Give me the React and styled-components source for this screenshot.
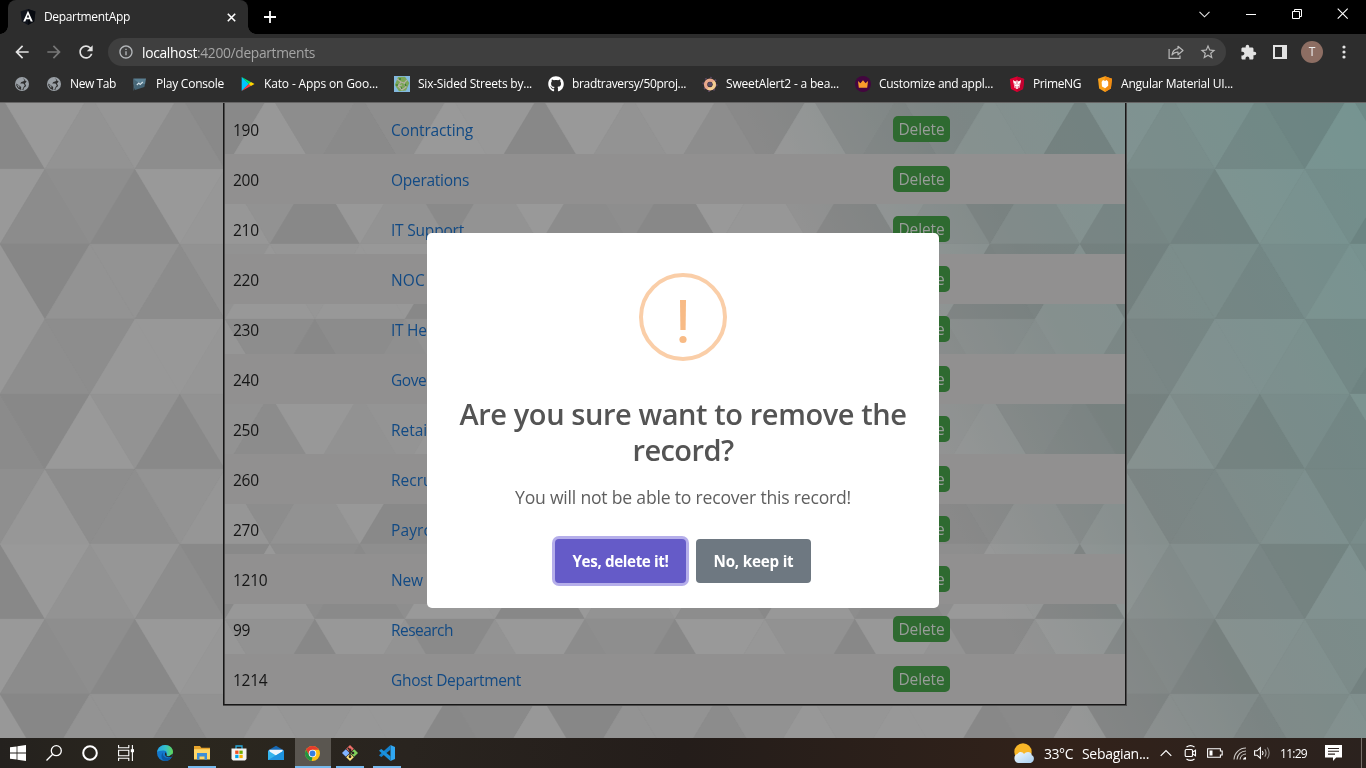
import React, { useLayoutEffect, useRef, useState } from "react";
import styled, { createGlobalStyle } from "styled-components";
import { MdArrowBack, MdArrowForward, MdRefresh, MdInfoOutline, MdStarBorder, MdExtension } from "react-icons/md";
import { FaGithub } from "react-icons/fa";

const GlobalStyle = createGlobalStyle`
  * { box-sizing: border-box; }
  html, body { margin: 0; padding: 0; overflow: hidden; background: #000; }
  body { font-family: "Open Sans", "Noto Sans", sans-serif; }
  svg { display: block; flex: none; }
`;

const Screen = styled.div`
  width: 1366px;
  height: 768px;
  display: flex;
  flex-direction: column;
  overflow: hidden;
`;

/* ---------- text that keeps a set measure ---------- */

const Measured = styled.span`
  display: inline-block;
  white-space: pre;
`;

function Fit({ width, children }) {
  const ref = useRef(null);
  const [spacing, setSpacing] = useState(0);
  useLayoutEffect(() => {
    const natural = ref.current.getBoundingClientRect().width;
    setSpacing((width - natural) / String(children).length);
  }, [width, children]);
  return (
    <Measured ref={ref} style={{ letterSpacing: `${spacing}px` }}>
      {children}
    </Measured>
  );
}

/* ---------- browser chrome ---------- */

const TabStrip = styled.div`
  height: 34px;
  flex: none;
  background: #000;
  display: flex;
  align-items: stretch;
  padding-left: 8px;
`;

const Tab = styled.div`
  position: relative;
  width: 240px;
  background: #2d2d2d;
  border-radius: 8px 8px 0 0;
  display: flex;
  align-items: center;
  padding: 0 12px 0 12px;
  color: #fff;
  font-size: 12px;
  &::before, &::after {
    content: "";
    position: absolute;
    bottom: 0;
    width: 8px;
    height: 8px;
  }
  &::before { left: -8px; background: radial-gradient(circle at 0 0, transparent 7.5px, #2d2d2d 8px); }
  &::after { right: -8px; background: radial-gradient(circle at 100% 0, transparent 7.5px, #2d2d2d 8px); }
`;

const TabTitle = styled.div`
  flex: 1;
  padding-left: 8px;
  line-height: 34px;
`;

const NewTab = styled.div`
  width: 44px;
  display: flex;
  align-items: center;
  justify-content: center;
`;

const WindowButtons = styled.div`
  margin-left: auto;
  display: flex;
`;

const WindowButton = styled.div`
  width: 46px;
  height: 28px;
  display: flex;
  align-items: center;
  justify-content: center;
`;

const Toolbar = styled.div`
  height: 34px;
  flex: none;
  background: #2d2d2d;
  display: flex;
  align-items: center;
  padding: 2px 0 0 6px;
  color: #dedede;
`;

const ToolSlot = styled.div`
  width: 32px;
  height: 32px;
  display: flex;
  align-items: center;
  justify-content: center;
  color: ${(p) => p.$color || "#e2e2e2"};
`;

const Omnibox = styled.div`
  margin: 0 6px;
  width: 1118px;
  height: 28px;
  border-radius: 14px;
  background: #3f3f3f;
  display: flex;
  align-items: center;
  padding: 0 2px 0 10px;
  font-size: 13.8px;
`;

const Address = styled.div`
  flex: 1;
  display: flex;
  padding: 1px 0 0 8px;
  line-height: 28px;
`;

const Host = styled.span`
  color: #fff;
`;

const Path = styled.span`
  color: #a5a5a5;
`;

const Avatar = styled.div`
  width: 22px;
  height: 22px;
  border-radius: 50%;
  background: #8d6e63;
  color: #eee;
  font-size: 12px;
  line-height: 22px;
  text-align: center;
`;

const Bookmarks = styled.div`
  height: 34px;
  flex: none;
  background: #2d2d2d;
  display: flex;
  align-items: center;
  gap: 16px;
  padding: 0 14px 2px;
`;

const Bookmark = styled.div`
  display: flex;
  align-items: center;
  gap: 8px;
  height: 16px;
  color: #fff;
  font-size: 12px;
  line-height: 16px;
`;

const ChromeEdge = styled.div`
  height: 1px;
  flex: none;
  background: #666565;
`;

/* ---------- page ---------- */

const Page = styled.main`
  position: relative;
  height: 635px;
  flex: none;
  overflow: hidden;
  padding-left: 223px;
`;

const Backdrop = styled.svg`
  position: absolute;
  inset: 0;
`;

const Tint = styled.div`
  position: absolute;
  inset: 0;
  mix-blend-mode: multiply;
  background: linear-gradient(63deg, #fff 63%, #e0f1ef 75%, #c5f9f4 100%);
`;

const Table = styled.div`
  position: relative;
  width: 904px;
  height: 603px;
  border: solid #4c4b4b;
  border-width: 0 2px 2px;
  padding-top: 1px;
  &::before {
    content: "";
    position: absolute;
    inset: 0 -1px -1px -2px;
    border: solid #171717;
    border-width: 0 1px 1px;
  }
`;

const Row = styled.div`
  height: 50px;
  display: grid;
  grid-template-columns: 158px 502px auto;
  align-items: center;
  justify-items: start;
  padding-left: 8px;
  font-size: 15.5px;
  line-height: 24px;
  background: ${(p) => (p.$striped ? "#919090" : "transparent")};
`;

const Id = styled.span`
  padding-top: 1px;
  color: #151515;
`;

const Name = styled.a`
  padding-top: 1px;
  color: #124a84;
`;

const DeleteButton = styled.button`
  width: 57px;
  height: 26px;
  border: 0;
  padding: 1px 0 0;
  border-radius: 5px;
  background: #2e6a30;
  color: #999c99;
  font: inherit;
  line-height: 25px;
`;

const Dialog = styled.section`
  position: absolute;
  left: 427px;
  top: 130px;
  width: 512px;
  height: 375px;
  border-radius: 5px;
  background: #fff;
  display: flex;
  flex-direction: column;
  align-items: center;
  padding-top: 40px;
  color: #545454;
`;

const Title = styled.h2`
  margin: 35px 0 0;
  display: flex;
  flex-direction: column;
  align-items: center;
  font-size: 29px;
  font-weight: 600;
  line-height: 36px;
`;

const Message = styled.p`
  margin: 16px 0 0;
  font-size: 17.6px;
  line-height: 26px;
  color: #5f5f5f;
`;

const Actions = styled.div`
  margin: 29px 0 0;
  display: flex;
  gap: 10px;
`;

const ActionButton = styled.button`
  width: ${(p) => p.$width}px;
  height: 44px;
  border: 0;
  padding: 1px 0 0;
  border-radius: 4px;
  background: ${(p) => (p.$primary ? "#655bc8" : "#6e7881")};
  box-shadow: ${(p) => (p.$primary ? "0 0 0 3px #b5aeea" : "none")};
  color: #fff;
  font: 700 15.2px/43px "Open Sans", sans-serif;
`;

/* ---------- taskbar ---------- */

const Taskbar = styled.footer`
  height: 30px;
  flex: none;
  display: flex;
  background: linear-gradient(90deg, #24211e 0%, #2b271e 12%, #29241f 30%, #241d1a 50%, #32221a 78%, #2b221e 100%);
`;

const SystemSlot = styled.div`
  width: 36px;
  display: flex;
  align-items: center;
  justify-content: center;
`;

const Apps = styled.div`
  display: flex;
  padding-left: 2px;
`;

const AppButton = styled.div`
  width: 37px;
  display: flex;
  flex-direction: column;
  align-items: center;
`;

const AppFace = styled.div`
  width: 36px;
  height: 28px;
  padding-top: 2px;
  display: flex;
  align-items: center;
  justify-content: center;
  background: ${(p) => (p.$active ? "#5a5650" : "transparent")};
`;

const AppLine = styled.div`
  width: ${(p) => (p.$active ? 36 : 28)}px;
  height: 2px;
  background: #76b9ed;
`;

const Tray = styled.div`
  margin-left: auto;
  display: flex;
  align-items: center;
  color: #fff;
  font-size: 14px;
`;

const TrayItem = styled.div`
  width: ${(p) => p.$width}px;
  display: flex;
  align-items: center;
`;

const Clock = styled(TrayItem)`
  font-size: 12px;
`;

const DesktopEdge = styled.div`
  width: 5px;
  height: 30px;
  border-left: 1px solid #77706b;
`;

/* ---------- triangle wallpaper ---------- */

const TILE = [
  [0x99, 0x8c, 0x8e, 0x88, 0x99, 0x97, 0x92, 0x88, 0x98, 0x93, 0x8a, 0x93],
  [0x98, 0x87, 0x93, 0x93, 0x8c, 0x92, 0x98, 0x96, 0x98, 0x98, 0x88, 0x8a],
  [0x98, 0x8e, 0x8d, 0x98, 0x98, 0x96, 0x8d, 0x88, 0x8c, 0x8f, 0x92, 0x95],
  [0x8b, 0x88, 0x99, 0x93, 0x89, 0x92, 0x8c, 0x98, 0x92, 0x94, 0x97, 0x8d],
  [0x8f, 0x97, 0x8d, 0x8e, 0x93, 0x96, 0x8d, 0x92, 0x98, 0x89, 0x8b, 0x94],
  [0x88, 0x99, 0x93, 0x96, 0x8d, 0x89, 0x98, 0x8d, 0x8a, 0x8e, 0x99, 0x98],
];

const triangles = [];
for (let row = -1; row < 8; row++) {
  const top = 66 + row * 75;
  const bottom = top + 75;
  for (let j = 0; j <= 31; j++) {
    const x = j * 45;
    const tileRow = (row + 6) % 6;
    const pointsUp = (tileRow + j) % 2 === 1;
    const g = TILE[tileRow][j % 12];
    triangles.push({
      key: `${row}:${j}`,
      fill: `rgb(${g},${g},${g})`,
      points: pointsUp
        ? `${x},${top} ${x + 45},${bottom} ${x - 45},${bottom}`
        : `${x - 45},${top} ${x + 45},${top} ${x},${bottom}`,
    });
  }
}

/* ---------- icons ---------- */

const GlobeIcon = () => (
  <svg width="16" height="16" viewBox="0 0 16 16">
    <circle cx="8" cy="8" r="7" fill="#9aa0a6" />
    <path d="M8.6 2.2 11 3.4 9.6 5.2 7.4 6 6.2 7.6H9.4L10.8 9.2 9.6 11 8.4 13.6 7 13.4 7.2 11 5.2 9.6 2.4 7.4 2.3 9.5 4 12.4 6.4 13.8 9.6 13.8 9.8 12 12.2 10 11 7.6 12.4 5.8 13.6 6.4" fill="#2d2d2d" />
    <path d="M2.6 8.2 5.4 10 5.2 12.2Z" fill="#9aa0a6" />
  </svg>
);

const AngularIcon = () => (
  <svg width="16" height="16" viewBox="0 0 16 16">
    <path d="M8 0 15.4 2.6 14.2 12.5 8 16 1.8 12.5.6 2.6Z" fill="#10141d" />
    <path d="M8 0 15.4 2.6 14.2 12.5 8 16Z" fill="#070a10" />
    <path d="M8 1.8 3.2 12.6H5.3L6.2 10.3H9.8L10.7 12.6H12.8ZM8 5.6 9.2 8.6H6.8Z" fill="#fff" fillRule="evenodd" />
  </svg>
);

const PlayConsoleIcon = () => (
  <svg width="16" height="16" viewBox="0 0 16 16">
    <path d="M1.5 2.5H14L13 8.5H1.5Z" fill="#5a7f92" />
    <path d="M1.5 2.5 5 6 2 14.5H1.5Z" fill="#4b6978" />
    <path d="M3 14V5L13 8.5 12.3 11Z" fill="#456576" />
    <path d="M4.8 9 6.8 7.1 8.2 8.4 10.8 6" stroke="#d4e1e8" strokeWidth="1.1" fill="none" />
  </svg>
);

const PlayIcon = () => (
  <svg width="16" height="16" viewBox="0 0 16 16">
    <path d="M1.7 1 9 8 1.7 15Z" fill="#00c3ff" />
    <path d="M1.7 1 11.2 6.2 9 8.2Z" fill="#00e676" />
    <path d="M1.7 15 11.2 9.8 9 7.8Z" fill="#ff3a44" />
    <path d="M11 6 14.5 8 11 10 8.8 8Z" fill="#ffd500" />
  </svg>
);

const StreetsIcon = () => (
  <svg width="16" height="16" viewBox="0 0 16 16">
    <rect width="16" height="16" fill="#83b9df" />
    <path d="M4 1 11 .8 15.3 7 12 14.5 5 15.2.8 9Z" fill="#7ba657" />
    <path d="m3 3 4 3-3 4 4 4 4-3-2-4 3-3M7 6l3 1M4 10l4-1" stroke="#b5b0a5" strokeWidth="1.1" fill="none" />
    <path d="M5 3h2M11 8l1 2M3 8v2M7 12h1" stroke="#3d7a36" strokeWidth="1.4" />
  </svg>
);

const SweetIcon = () => (
  <svg width="16" height="16" viewBox="0 0 16 16">
    <circle cx="8" cy="8.3" r="6.9" fill="none" stroke="#5b4765" strokeWidth="1.4" strokeDasharray="1.8 3.6" />
    <circle cx="8" cy="8.5" r="4.4" fill="none" stroke="#e9a88c" strokeWidth="3.4" />
    <path d="M11.3 5.6A4.4 4.4 0 0 1 6 12.4" fill="none" stroke="#f3cf92" strokeWidth="2.6" />
    <circle cx="8" cy="8.3" r="2.2" fill="#5d4b68" />
  </svg>
);

const CrownIcon = () => (
  <svg width="16" height="16" viewBox="0 0 16 16">
    <circle cx="8" cy="8" r="8" fill="#43063f" />
    <path d="M3 5 5.4 7.2 8 4.3 10.6 7.2 13 5 12.2 11.7H3.8Z" fill="#f99d2b" />
  </svg>
);

const PrimeIcon = () => (
  <svg width="16" height="16" viewBox="0 0 16 16">
    <path d="M8 .4 15.2 3 14 13 8 16 2 13 .8 3Z" fill="#dd0031" />
    <path d="M8 .4 15.2 3 14 13 8 16Z" fill="#c3002f" />
    <path d="M4 4 6.3 5.4 7.4 4.4H8.6L9.7 5.4 12 4 11.2 8.6 10.6 9.5V11.5L9.5 12.5V10H6.5V12.5L5.4 11.5V9.5L4.8 8.6Z" fill="#fff" />
    <path d="M7.2 10H8.8V13H7.2Z" fill="#fff" />
    <path d="M4.5 7.7 6.5 8.4M11.5 7.7 9.5 8.4M8 4.5v4" stroke="#d1002e" strokeWidth=".6" />
  </svg>
);

const MaterialIcon = () => (
  <svg width="16" height="16" viewBox="0 0 16 16">
    <path d="M8 .3 15 2.8 13.9 12.5 8 16 2.1 12.5 1 2.8Z" fill="#f9a11b" />
    <path d="M8 .3 15 2.8 13.9 12.5 8 16Z" fill="#f28c12" />
    <path d="M6 4 8 5 9.7 4 11.2 5.7V9.8L8.2 12.3 5 10.5 4.6 6Z" fill="#fff" />
  </svg>
);

const ShareIcon = () => (
  <svg width="16" height="16" viewBox="0 0 16 16" fill="none" stroke="currentColor" strokeWidth="1.2">
    <path d="M1.1 5V14.4H12V11.5" />
    <path d="M10 2.3 15 6.5 10 10.8V8.2C7.5 8 5.5 9 4 11 4.5 7.5 6.7 5 10 4.6Z" strokeLinejoin="round" />
  </svg>
);

const WarningIcon = () => (
  <svg width="88" height="88" viewBox="0 0 88 88">
    <circle cx="44" cy="44" r="42" fill="none" stroke="#facea8" strokeWidth="4" />
    <path d="M41 27H47L46.6 57H41.4Z" fill="#f8bb86" />
    <circle cx="44" cy="66.5" r="3.6" fill="#f8bb86" />
  </svg>
);

const WindowsIcon = () => (
  <svg width="16" height="16" viewBox="0 0 16 16" fill="#fff">
    <path d="M0 2.3 6.6 1.4V7.6H0ZM7.4 1.3 16 0V7.6H7.4ZM0 8.4H6.6V14.6L0 13.7ZM7.4 8.4H16V16L7.4 14.7Z" />
  </svg>
);

const SearchIcon = () => (
  <svg width="16" height="16" viewBox="0 0 16 16" fill="none" stroke="#fff" strokeWidth="1.3">
    <circle cx="10.3" cy="5.7" r="5" />
    <path d="M6.7 9.3.5 15.5" />
  </svg>
);

const TaskViewIcon = () => (
  <svg width="16" height="16" viewBox="0 0 16 16" fill="none" stroke="#fff" strokeWidth="1.1">
    <path d="M.6 0V2.8H10.8V0M.6 16V13.2H10.8V16M.6 5.2H10.8V10.8H.6ZM14.4 0V16" />
    <path d="M12.8 4.2H16V7.2H12.8Z" fill="#fff" stroke="none" />
  </svg>
);

const EdgeIcon = () => (
  <svg width="16" height="16" viewBox="0 0 16 16">
    <defs>
      <linearGradient id="edge" x1="0" x2="1">
        <stop offset="0" stopColor="#27a5e4" />
        <stop offset=".55" stopColor="#35c1c9" />
        <stop offset="1" stopColor="#65d84d" />
      </linearGradient>
    </defs>
    <circle cx="8" cy="8" r="8" fill="#1378cc" />
    <path d="M.1 7.3C.8 3 4.1 0 8.2 0 12.7 0 16 3.3 16 7c0 2.6-1.8 4.3-4.2 4.3-1.8 0-2.6-.7-2.3-1.2.9-1 .7-4.6-3-4.6C3 5.5.8 6.3.1 7.3Z" fill="url(#edge)" />
    <path d="M6 7.2C4.9 10.3 8 14 13 12.6L15 11.7C13.6 14.5 11 16 8.4 16 4.6 15.6 3.1 10.3 6 7.2Z" fill="#0c59a4" />
    <path d="M8.8 7.2C6.6 9.6 9 12.5 12.5 12.1 14.2 12 15.4 11.2 15.4 11.2L16 8.6 12 11.3C9.8 11.2 9 10.6 9.7 9.5Z" fill="#2a2520" />
  </svg>
);

const FolderIcon = () => (
  <svg width="16" height="14" viewBox="0 0 16 14">
    <path d="M0 0H6L7.3 1.7H16V13H0Z" fill="#e6a42c" />
    <path d="M0 3.2H16V13.5H0Z" fill="#ffd869" />
    <path d="M3 13.8V7H13V13.8H10.5V10.4H5.5V13.8Z" fill="#3e8fd8" />
  </svg>
);

const StoreIcon = () => (
  <svg width="16" height="16" viewBox="0 0 16 16">
    <path d="M5 4V1H11V4" fill="none" stroke="#29a9dc" strokeWidth="1.3" />
    <path d="M.5 3.4H15.5V14L14 15.6H2L.5 14Z" fill="#f4f4f4" />
    <path d="M4.2 5.6H7.5V8.9H4.2Z" fill="#f25022" />
    <path d="M8.4 5.6H11.7V8.9H8.4Z" fill="#6fae00" />
    <path d="M4.2 9.8H7.5V13.1H4.2Z" fill="#00a4ef" />
    <path d="M8.4 9.8H11.7V13.1H8.4Z" fill="#f5b000" />
  </svg>
);

const MailIcon = () => (
  <svg width="16" height="16" viewBox="0 0 16 16">
    <path d="M0 5.5 8 .8 16 5.5V15H0Z" fill="#1668b4" />
    <path d="M1.3 4.8H14.7V8L8 11 1.3 8Z" fill="#eef6fc" />
    <path d="M0 5.5 8 10.5 16 5.5V15H0Z" fill="#35b5ed" />
    <path d="M16 5.5V15H0Z" fill="#1e93df" />
  </svg>
);

const ChromeIcon = () => (
  <svg width="15" height="15" viewBox="0 0 16 16">
    <circle cx="8" cy="8" r="8" fill="#fbc116" />
    <path d="M1.1 4A8 8 0 0 1 14.9 4H8L4.5 10Z" fill="#e33b2e" />
    <path d="M1.1 4 4.6 10 8 12 7 15.95A8 8 0 0 1 1.1 4Z" fill="#229342" />
    <circle cx="8" cy="8" r="4" fill="#fff" />
    <circle cx="8" cy="8" r="3.1" fill="#347de0" />
  </svg>
);

const GitIcon = () => (
  <svg width="16" height="16" viewBox="0 0 16 16">
    <path d="M8 0 11.8 3.8 8 7.6 4.2 3.8Z" fill="#ee6f69" />
    <path d="M3.8 4.2 7.6 8 3.8 11.8 0 8Z" fill="#80b3ff" />
    <path d="M12.2 4.2 16 8 12.2 11.8 8.4 8Z" fill="#80d25b" />
    <path d="M8 8.4 11.8 12.2 8 16 4.2 12.2Z" fill="#ffe680" />
    <path d="M5.7 2.8 8 5V12M8 5.5 11 8" stroke="#2c2520" strokeWidth="1.2" fill="none" />
    <circle cx="8" cy="5" r="1.4" fill="#2c2520" />
    <circle cx="8" cy="11.8" r="1.4" fill="#2c2520" />
    <circle cx="11" cy="8" r="1.3" fill="#2c2520" />
  </svg>
);

const CodeIcon = () => (
  <svg width="16" height="16" viewBox="0 0 16 16">
    <path d="M11.5 0 16 2V14L11.5 16Z" fill="#30a7f2" />
    <path d="M11.5 0V4.7L2.4 12 .3 10.7V9.9Z" fill="#1482cf" />
    <path d="M11.5 16V11.3L2.4 4 .3 5.3V6.1Z" fill="#1b91dd" />
  </svg>
);

const WeatherIcon = () => (
  <svg width="22" height="20" viewBox="0 0 22 20">
    <defs>
      <linearGradient id="cloud" x1="0" x2="1" y1="0" y2="1">
        <stop offset="0" stopColor="#f2f8fd" />
        <stop offset="1" stopColor="#a8d0f2" />
      </linearGradient>
    </defs>
    <circle cx="10" cy="9" r="8.7" fill="#f8b628" />
    <path d="M5.5 20A4.8 4.8 0 0 1 4.7 10.7C6.2 8 10 8.7 11 11 13 8 18.5 8.3 18.8 12.2 22 13.3 21.5 19 17.6 20Z" fill="url(#cloud)" />
  </svg>
);

const MeetIcon = () => (
  <svg width="13" height="16" viewBox="0 0 13 16" fill="none" stroke="#fff" strokeWidth="1.1">
    <path d="M2.5 2Q6.5-.8 10.5 2M2.5 14Q6.5 16.8 10.5 14" />
    <rect x="1.2" y="4.5" width="7.3" height="7" rx="1" />
    <path d="M8.5 7.2 11.5 5.2V10.8L8.5 8.8" />
  </svg>
);

const BatteryIcon = () => (
  <svg width="16" height="10" viewBox="0 0 16 10" fill="none" stroke="#fff" strokeWidth="1.1">
    <path d="M.6.8H13.4V3H15.2V7H13.4V9.2H.6Z" />
    <path d="M2.5 2.5H5.5V7.5H2.5Z" fill="#fff" stroke="none" />
  </svg>
);

const WifiIcon = () => (
  <svg width="14" height="14" viewBox="0 0 14 14" fill="none" stroke="#fff" strokeWidth="1.1">
    <path d="M1 13.5A12 12 0 0 1 13 2M4 13.5A9 9 0 0 1 13 5M7 13.5A6.2 6.2 0 0 1 13 8" stroke="#cfccc9" />
    <path d="M9.8 13.5A3.5 3.5 0 0 1 13 11V13.5Z" fill="#fff" stroke="none" />
  </svg>
);

const VolumeIcon = () => (
  <svg width="17" height="14" viewBox="0 0 17 14" fill="none" stroke="#fff" strokeWidth="1.1">
    <path d="M.6 4.8H3L6.4 1.8V12.2L3 9.2H.6Z" />
    <path d="M8.4 5Q9.8 7 8.4 9" />
    <path d="M10.8 3.3Q13.3 7 10.8 10.7" stroke="#aaa6a3" />
    <path d="M13.3 1.5Q17 7 13.3 12.5" stroke="#8d8885" />
  </svg>
);

const NoticeIcon = () => (
  <svg width="17" height="16" viewBox="0 0 17 16">
    <path d="M0 0H17V12.5H11.2L8 16V12.5H0Z" fill="#fff" />
    <path d="M3 3.5H14M3 6.3H14M3 9.1H10" stroke="#2d231f" strokeWidth="1.1" />
  </svg>
);

/* ---------- data ---------- */

const bookmarks = [
  [<GlobeIcon />, "New Tab", 46],
  [<PlayConsoleIcon />, "Play Console", 68],
  [<PlayIcon />, "Kato - Apps on Goo...", 114],
  [<StreetsIcon />, "Six-Sided Streets by...", 114],
  [<FaGithub size={16} color="#fff" />, "bradtraversy/50proj...", 114],
  [<SweetIcon />, "SweetAlert2 - a bea...", 113],
  [<CrownIcon />, "Customize and appl...", 114],
  [<PrimeIcon />, "PrimeNG", 48],
  [<MaterialIcon />, "Angular Material UI...", 112],
];

const departments = [
  ["190", "Contracting", 82],
  ["200", "Operations", 78],
  ["210", "IT Support", 73],
  ["220", "NOC", 34],
  ["230", "IT Helpdesk", 81],
  ["240", "Government Sales", 125],
  ["250", "Retail Sales", 81],
  ["260", "Recruiting", 73],
  ["270", "Payroll", 50],
  ["1210", "New Department", 121],
  ["99", "Research", 62],
  ["1214", "Ghost Department", 130],
];

const apps = [
  { id: "edge", icon: <EdgeIcon /> },
  { id: "files", icon: <FolderIcon />, open: true },
  { id: "store", icon: <StoreIcon /> },
  { id: "mail", icon: <MailIcon /> },
  { id: "chrome", icon: <ChromeIcon />, open: true, active: true },
  { id: "git", icon: <GitIcon />, open: true },
  { id: "code", icon: <CodeIcon />, open: true },
];

export default function App() {
  return (
    <Screen>
      <GlobalStyle />
      <TabStrip>
        <Tab>
          <AngularIcon />
          <TabTitle><Fit width={86}>DepartmentApp</Fit></TabTitle>
          <svg width="9" height="9" viewBox="0 0 9 9"><path d="M.8.8 8.2 8.2M8.2.8.8 8.2" stroke="#fff" strokeWidth="1.6" /></svg>
        </Tab>
        <NewTab>
          <svg width="12" height="12" viewBox="0 0 12 12"><path d="M6 0V12M0 6H12" stroke="#fff" strokeWidth="1.8" /></svg>
        </NewTab>
        <WindowButtons>
          <WindowButton><svg width="12" height="7" viewBox="0 0 12 7"><path d="M.5.8 5.5 5.8 10.5.8" fill="none" stroke="#e4e4e4" strokeWidth="1.1" /></svg></WindowButton>
          <WindowButton><svg width="10" height="1" viewBox="0 0 10 1"><path d="M0 0H10V1H0Z" fill="#fff" /></svg></WindowButton>
          <WindowButton><svg width="10" height="10" viewBox="0 0 10 10"><path d="M.5 2.5H7.5V9.5H.5ZM2.5 2.5V.5H9.5V7.5H7.5" fill="none" stroke="#fff" /></svg></WindowButton>
          <WindowButton><svg width="12" height="12" viewBox="0 0 12 12"><path d="M.7.7 10.7 10.7M10.7.7.7 10.7" stroke="#fff" strokeWidth="1.1" /></svg></WindowButton>
        </WindowButtons>
      </TabStrip>

      <Toolbar>
        <ToolSlot><MdArrowBack size={20} /></ToolSlot>
        <ToolSlot $color="#777"><MdArrowForward size={20} /></ToolSlot>
        <ToolSlot><MdRefresh size={20} /></ToolSlot>
        <Omnibox>
          <MdInfoOutline size={16} color="#b5b8bb" />
          <Address>
            <Host><Fit width={55}>localhost</Fit></Host>
            <Path><Fit width={118}>:4200/departments</Fit></Path>
          </Address>
          <ToolSlot $color="#b8b8b8"><ShareIcon /></ToolSlot>
          <ToolSlot $color="#b8b8b8"><MdStarBorder size={18} /></ToolSlot>
        </Omnibox>
        <ToolSlot><MdExtension size={17} /></ToolSlot>
        <ToolSlot>
          <svg width="14" height="14" viewBox="0 0 14 14"><path d="M0 0H14V14H0ZM2 2V12H9V2Z" fill="#e2e2e2" fillRule="evenodd" /></svg>
        </ToolSlot>
        <ToolSlot><Avatar>T</Avatar></ToolSlot>
        <ToolSlot>
          <svg width="4" height="14" viewBox="0 0 4 14" fill="#e2e2e2"><circle cx="2" cy="2" r="1.6" /><circle cx="2" cy="7" r="1.6" /><circle cx="2" cy="12" r="1.6" /></svg>
        </ToolSlot>
      </Toolbar>

      <Bookmarks>
        <Bookmark><GlobeIcon /></Bookmark>
        {bookmarks.map(([icon, label, width]) => (
          <Bookmark key={label}>{icon}<Fit width={width}>{label}</Fit></Bookmark>
        ))}
      </Bookmarks>
      <ChromeEdge />

      <Page>
        <Backdrop width="1366" height="635" viewBox="0 0 1366 635" shapeRendering="geometricPrecision">
          <rect width="1366" height="635" fill="#919191" />
          {triangles.map((t) => (
            <polygon key={t.key} points={t.points} fill={t.fill} stroke={t.fill} strokeWidth="0.3" />
          ))}
        </Backdrop>
        <Tint />
        <Table>
          {departments.map(([id, name, width], i) => (
            <Row key={id} $striped={i % 2 === 1}>
              <Id><Fit width={id.length * 8.6}>{id}</Fit></Id>
              <Name><Fit width={width}>{name}</Fit></Name>
              <DeleteButton><Fit width={46}>Delete</Fit></DeleteButton>
            </Row>
          ))}
        </Table>
        <Dialog>
          <WarningIcon />
          <Title>
            <Fit width={447}>Are you sure want to remove the</Fit>
            <Fit width={101}>record?</Fit>
          </Title>
          <Message><Fit width={336}>You will not be able to recover this record!</Fit></Message>
          <Actions>
            <ActionButton $primary $width={131}><Fit width={96}>Yes, delete it!</Fit></ActionButton>
            <ActionButton $width={115}><Fit width={80}>No, keep it</Fit></ActionButton>
          </Actions>
        </Dialog>
      </Page>

      <Taskbar>
        <SystemSlot><WindowsIcon /></SystemSlot>
        <SystemSlot><SearchIcon /></SystemSlot>
        <SystemSlot>
          <svg width="16" height="16" viewBox="0 0 16 16"><circle cx="8" cy="8" r="6.8" fill="none" stroke="#fff" strokeWidth="2" /></svg>
        </SystemSlot>
        <SystemSlot><TaskViewIcon /></SystemSlot>
        <Apps>
          {apps.map((app) => (
            <AppButton key={app.id}>
              <AppFace $active={app.active}>{app.icon}</AppFace>
              {app.open && <AppLine $active={app.active} />}
            </AppButton>
          ))}
        </Apps>
        <Tray>
          <TrayItem $width={31}><WeatherIcon /></TrayItem>
          <TrayItem $width={38}><Fit width={29}>33°C</Fit></TrayItem>
          <TrayItem $width={78}><Fit width={67}>Sebagian...</Fit></TrayItem>
          <TrayItem $width={24}><svg width="12" height="8" viewBox="0 0 12 8"><path d="M.7 6.8 6 1.5 11.3 6.8" fill="none" stroke="#fff" strokeWidth="1.2" /></svg></TrayItem>
          <TrayItem $width={23}><MeetIcon /></TrayItem>
          <TrayItem $width={26}><BatteryIcon /></TrayItem>
          <TrayItem $width={21}><WifiIcon /></TrayItem>
          <TrayItem $width={26}><VolumeIcon /></TrayItem>
          <Clock $width={45}><Fit width={27}>11:29</Fit></Clock>
          <TrayItem $width={36}><NoticeIcon /></TrayItem>
          <DesktopEdge />
        </Tray>
      </Taskbar>
    </Screen>
  );
}
